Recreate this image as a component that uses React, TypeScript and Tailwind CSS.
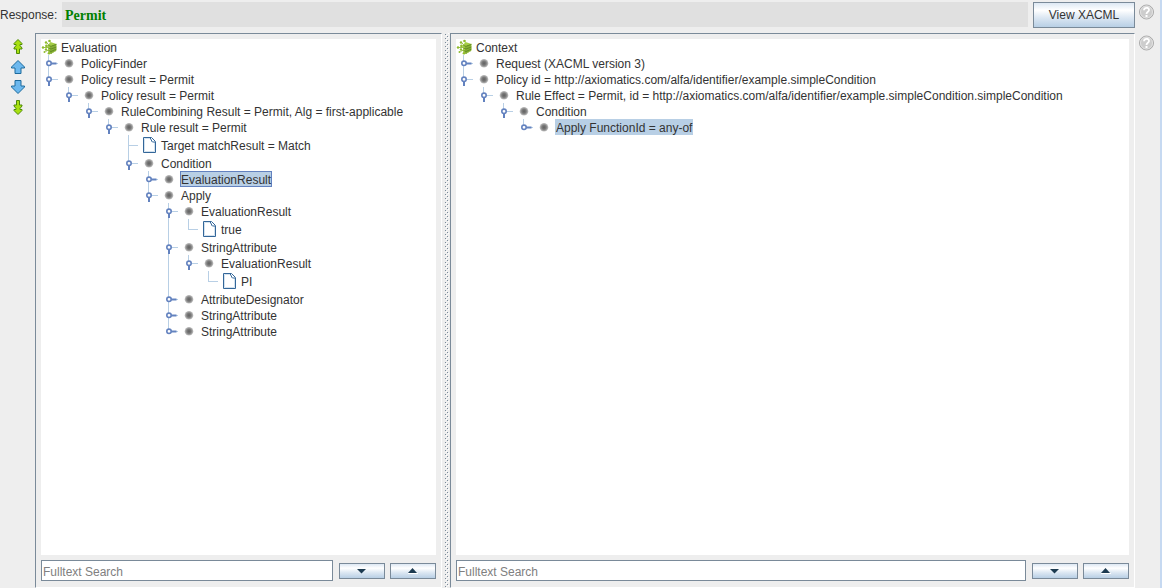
import { useId } from "react";
import clsx from "clsx";

type TreeNode = {
  label: string;
  kind?: "branch" | "leaf";
  selected?: "focused" | "plain";
  children?: TreeNode[];
};

type Row = {
  node: TreeNode;
  guides: boolean[];
  last: boolean;
  depth: number;
};

const evaluationTree: TreeNode = {
  label: "Evaluation",
  children: [
    { label: "PolicyFinder" },
    {
      label: "Policy result = Permit",
      children: [
        {
          label: "Policy result = Permit",
          children: [
            {
              label: "RuleCombining Result = Permit, Alg = first-applicable",
              children: [
                {
                  label: "Rule result = Permit",
                  children: [
                    { label: "Target matchResult = Match", kind: "leaf" },
                    {
                      label: "Condition",
                      children: [
                        { label: "EvaluationResult", selected: "focused" },
                        {
                          label: "Apply",
                          children: [
                            {
                              label: "EvaluationResult",
                              children: [{ label: "true", kind: "leaf" }],
                            },
                            {
                              label: "StringAttribute",
                              children: [
                                {
                                  label: "EvaluationResult",
                                  children: [{ label: "PI", kind: "leaf" }],
                                },
                              ],
                            },
                            { label: "AttributeDesignator" },
                            { label: "StringAttribute" },
                            { label: "StringAttribute" },
                          ],
                        },
                      ],
                    },
                  ],
                },
              ],
            },
          ],
        },
      ],
    },
  ],
};

const contextTree: TreeNode = {
  label: "Context",
  children: [
    { label: "Request (XACML version 3)" },
    {
      label: "Policy id = http://axiomatics.com/alfa/identifier/example.simpleCondition",
      children: [
        {
          label:
            "Rule Effect = Permit, id = http://axiomatics.com/alfa/identifier/example.simpleCondition.simpleCondition",
          children: [
            {
              label: "Condition",
              children: [{ label: "Apply FunctionId = any-of", selected: "plain" }],
            },
          ],
        },
      ],
    },
  ],
};

// Depth-first list of visible rows; guides[i] says if level i still has siblings below
function flatten(node: TreeNode, guides: boolean[] = [], last = true, depth = 0): Row[] {
  const own: Row = { node, guides, last, depth };
  const childGuides = depth === 0 ? [] : [...guides, !last];
  const kids = node.children ?? [];
  return [
    own,
    ...kids.flatMap((child, i) =>
      flatten(child, childGuides, i === kids.length - 1, depth + 1)
    ),
  ];
}

function RootIcon() {
  return (
    <svg width="16" height="16" viewBox="0 0 16 16" className="shrink-0">
      <path d="M9.500 3 15.500 5v6.500L10 15l-3-2.500V6z" fill="#a3cc45" />
      <path
        d="M10 7v8M12 6v7.500M14 5.500v7M7.500 9l2.500 1 5.500-2M7.500 11.500l2.500 1 5.500-2.500M7.500 6.500l2.500.8 5.500-2"
        stroke="#5c8420"
        strokeWidth="0.8"
        fill="none"
      />
      <path d="M2 8.500h5M5 3l3 3M4.500 12.500l3-1.500" stroke="#9cbf55" strokeWidth="1" />
      <g fill="#8fbb2c">
        <circle cx="8.500" cy="2" r="1.300" />
        <circle cx="5" cy="3.500" r="1.200" />
        <circle cx="2" cy="8.500" r="1.200" />
        <circle cx="5.500" cy="7" r="1.400" />
        <circle cx="5" cy="10.500" r="1.200" />
        <circle cx="3.500" cy="13" r="1" />
        <circle cx="8" cy="14.300" r="1.300" />
      </g>
    </svg>
  );
}

function NodeIcon() {
  const id = useId();
  return (
    <svg width="16" height="16" viewBox="0 0 16 16" className="shrink-0">
      <defs>
        <radialGradient id={id}>
          <stop offset="0" stopColor="#606060" />
          <stop offset="0.5" stopColor="#7c7c7c" />
          <stop offset="1" stopColor="#c4c4c4" />
        </radialGradient>
      </defs>
      <circle cx="8" cy="8.300" r="4.300" fill={`url(#${id})`} />
    </svg>
  );
}

function LeafIcon() {
  return (
    <svg width="16" height="20" viewBox="0 0 16 20" className="shrink-0">
      <path d="M2.500 2.500h8l4 4v11h-12z" fill="#fff" stroke="#336699" />
      <path d="M3.500 16.500v-13h6M13.500 7v9.500h-10" fill="none" stroke="#d3e2ef" />
      <path d="M9.500 3v1l1 1v1l1 1h2.500" fill="none" stroke="#336699" />
    </svg>
  );
}

function Handle({ row, last }: { row: Row; last: boolean }) {
  const leaf = row.node.kind === "leaf";
  const open = Boolean(row.node.children);
  const h = leaf ? 20 : 16;
  const mid = h / 2;
  return (
    <svg width="20" height={h} viewBox={`0 0 20 ${h}`} className="shrink-0">
      <path d={`M7.500 0V${last ? mid : h}M7 ${mid + 0.5}H17`} stroke="#b8cfe5" fill="none" />
      {!leaf && (
        <>
          <path d={open ? "M8 10V15" : "M10 8.500H15.500"} stroke="#6382bf" strokeWidth="2" />
          <circle cx="8" cy="8.300" r="2.200" fill="#fff" stroke="#6382bf" strokeWidth="1.600" />
        </>
      )}
    </svg>
  );
}

function TreeRow({ row }: { row: Row }) {
  const { node, guides, depth, last } = row;
  const leaf = node.kind === "leaf";
  return (
    <li
      role="treeitem"
      aria-level={depth + 1}
      aria-selected={Boolean(node.selected)}
      className={clsx("flex items-center", leaf ? "h-5" : "h-4")}
    >
      {guides.map((line, i) => (
        <span key={i} className="flex w-5 shrink-0 self-stretch pl-[7px]">
          {line && <span className="w-px bg-[#b8cfe5]" />}
        </span>
      ))}
      {depth > 0 && <Handle row={row} last={last} />}
      <span className="w-[19px] shrink-0">
        {depth === 0 ? <RootIcon /> : leaf ? <LeafIcon /> : <NodeIcon />}
      </span>
      <span
        className={clsx(
          "flex h-4 items-center border pt-0.5 whitespace-nowrap",
          node.selected ? "bg-[#b8cfe5]" : "border-transparent",
          node.selected === "focused" && "border-[#6382bf]",
          node.selected === "plain" && "border-[#b8cfe5]"
        )}
      >
        {node.label}
      </span>
    </li>
  );
}

function Tree({ root }: { root: TreeNode }) {
  return (
    <ul role="tree" aria-label={root.label} className="min-h-0 flex-1 overflow-hidden bg-white">
      {flatten(root).map((row, i) => (
        <TreeRow key={i} row={row} />
      ))}
    </ul>
  );
}

const metal =
  "border border-[#7a8a99] bg-[linear-gradient(#dde8f3_0%,#ffffff_30%,#dde8f3_60%,#b8cfe5_100%)]";

function StepButton({ up }: { up?: boolean }) {
  return (
    <button
      type="button"
      aria-label={up ? "Previous match" : "Next match"}
      className={clsx(metal, "flex h-4 w-[46px] shrink-0 items-center justify-center")}
    >
      <svg width="10" height="6" viewBox="0 0 10 6">
        <path d={up ? "M0 5h9L4.500 0z" : "M0 1h9L4.500 5.500z"} fill="#1c3a50" />
        {up && <path d="M0 5.500h10" stroke="#fff" />}
      </svg>
    </button>
  );
}

function TreePanel({ root, className }: { root: TreeNode; className: string }) {
  return (
    <section
      className={clsx(
        "flex min-w-0 flex-col border border-t-[#7a8a99] border-r-white border-b-white border-l-[#7a8a99] px-[5px] pt-[5px] pb-1.5",
        className
      )}
    >
      <Tree root={root} />
      <div className="mt-[5px] flex shrink-0 items-center">
        <input
          type="text"
          aria-label={`Search ${root.label}`}
          placeholder="Fulltext Search"
          className="mr-1.5 h-[21px] min-w-0 flex-1 border border-[#7a8a99] bg-white px-px pt-0.5 outline-none placeholder:text-[#808080]"
        />
        <div className="flex gap-[5px]">
          <StepButton />
          <StepButton up />
        </div>
      </div>
    </section>
  );
}

function HelpButton() {
  return (
    <button type="button" aria-label="Help" className="size-4">
      <svg width="16" height="16" viewBox="0 0 16 16">
        <circle cx="7.500" cy="8" r="7" fill="#cdcdcd" stroke="#aaaaaa" />
        <circle cx="7.500" cy="8" r="6" fill="none" stroke="#e2e2e2" />
        <path
          d="M5 6.200C5 3 10 3 10 6c0 1.800-2.500 1.800-2.500 4"
          fill="none"
          stroke="#fff"
          strokeWidth="1.800"
        />
        <path d="M6.500 11h2v2h-2z" fill="#fff" />
      </svg>
    </button>
  );
}

const arrows = [
  { label: "First", green: true, down: false },
  { label: "Previous", green: false, down: false },
  { label: "Next", green: false, down: true },
  { label: "Last", green: true, down: true },
];

function ArrowButton({ label, green, down }: (typeof arrows)[number]) {
  return (
    <button type="button" aria-label={label} className="size-4">
      <svg width="16" height="16" viewBox="0 0 16 16" className={clsx(down && "-scale-y-100")}>
        {green ? (
          <path
            d="M8 .5 12 4.500v1H10v1l2 2.500v1H9.500v4.500h-3V10H4V9l2-2.500v-1H4v-1z"
            fill="#a8e010"
            stroke="#4f8a08"
          />
        ) : (
          <path d="M8 1.500 14.500 8v1H11v5.500H5V9H1.500V8z" fill="#6cb8ee" stroke="#1c6a9c" />
        )}
      </svg>
    </button>
  );
}

function Divider() {
  return (
    <div role="separator" aria-orientation="vertical" className="w-2 shrink-0">
      <svg width="8" height="100%">
        <defs>
          <pattern id="bumps" width="8" height="4" patternUnits="userSpaceOnUse">
            <path d="M3 1h1v1h-1zM5 3h1v1h-1z" fill="#7a8a99" />
            <path d="M4 2h1v1h-1zM6 0h1v1h-1z" fill="#fff" />
          </pattern>
        </defs>
        <rect width="8" height="100%" fill="url(#bumps)" />
      </svg>
    </div>
  );
}

export default function App() {
  return (
    <div className="flex h-screen flex-col overflow-hidden border-r-2 border-[#c6d9f1] bg-[#eeeeee] font-['Liberation_Sans',Arial,sans-serif] text-[12px] leading-[14px] text-[#333333]">
      <header className="flex shrink-0 items-start pt-0.5 pb-[5px]">
        <span id="response-label" className="w-[62px] py-1.5">
          Response:
        </span>
        <output
          aria-labelledby="response-label"
          className="mr-[5px] flex h-[25px] flex-1 items-center bg-[#e0e0e0] pt-0.5 pl-[3px] font-['Liberation_Serif',serif] text-[14px] font-bold text-[#008000]"
        >
          Permit
        </output>
        <button type="button" className={clsx(metal, "h-[26px] w-[102px]")}>
          View XACML
        </button>
        <div className="flex w-[25px] pt-0.5 pl-1">
          <HelpButton />
        </div>
      </header>

      <main className="flex min-h-0 flex-1">
        <nav aria-label="Steps" className="flex w-[35px] shrink-0 flex-col items-center gap-1 pt-1.5">
          {arrows.map((arrow) => (
            <ArrowButton key={arrow.label} {...arrow} />
          ))}
        </nav>
        <TreePanel root={evaluationTree} className="flex-[395]" />
        <Divider />
        <TreePanel root={contextTree} className="flex-[673]" />
        <aside className="flex w-[25px] shrink-0 pt-0.5 pl-1">
          <HelpButton />
        </aside>
      </main>
    </div>
  );
}
